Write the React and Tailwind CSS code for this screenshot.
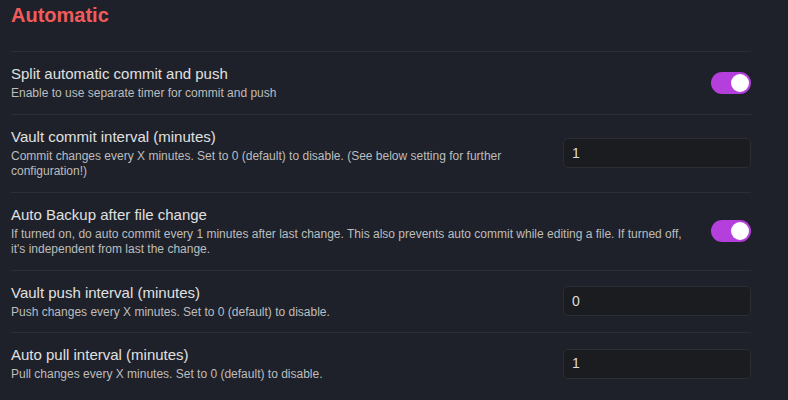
import React from "react";

const settings = [
  {
    name: "Split automatic commit and push",
    desc: "Enable to use separate timer for commit and push",
    type: "toggle",
  },
  {
    name: "Vault commit interval (minutes)",
    desc: "Commit changes every X minutes. Set to 0 (default) to disable. (See below setting for further configuration!)",
    type: "text",
    value: "1",
  },
  {
    name: "Auto Backup after file change",
    desc: "If turned on, do auto commit every 1 minutes after last change. This also prevents auto commit while editing a file. If turned off, it's independent from last the change.",
    type: "toggle",
  },
  {
    name: "Vault push interval (minutes)",
    desc: "Push changes every X minutes. Set to 0 (default) to disable.",
    type: "text",
    value: "0",
  },
  {
    name: "Auto pull interval (minutes)",
    desc: "Pull changes every X minutes. Set to 0 (default) to disable.",
    type: "text",
    value: "1",
  },
];

function Toggle() {
  return (
    <div className="w-[40px] h-[22px] rounded-full bg-[#b43fdc] p-[2px] flex justify-end flex-shrink-0">
      <div className="w-[18px] h-[18px] rounded-full bg-white" />
    </div>
  );
}

function TextInput({ value }) {
  return (
    <div className="w-[188px] h-[30px] rounded-[5px] border border-[#2b2e35] bg-[#1a1c20] px-[8px] flex items-center text-[14px] text-[#dcdcdc] flex-shrink-0">
      {value}
    </div>
  );
}

function SettingItem({ item }) {
  return (
    <div className="flex items-center border-t border-[#2b2e35] py-3">
      <div className="flex-1 min-w-0 mr-4">
        <div className="text-[15px] leading-[20px] text-[#e0e0e0]">{item.name}</div>
        <div className="text-[12px] leading-[15.5px] text-[#bdbdbd] pt-[2px]">{item.desc}</div>
      </div>
      {item.type === "toggle" ? <Toggle /> : <TextInput value={item.value} />}
    </div>
  );
}

export default function App() {
  return (
    <div
      className="min-h-[400px] bg-[#1e2129] pl-[11px] pr-[37px] pt-[3px]"
      style={{ fontFamily: '"Liberation Sans", Arial, sans-serif' }}
    >
      <h3 className="text-[20px] leading-[24px] font-bold text-[#f25b5b] mb-[24px]">Automatic</h3>
      {settings.map((item) => (
        <SettingItem key={item.name} item={item} />
      ))}
    </div>
  );
}
